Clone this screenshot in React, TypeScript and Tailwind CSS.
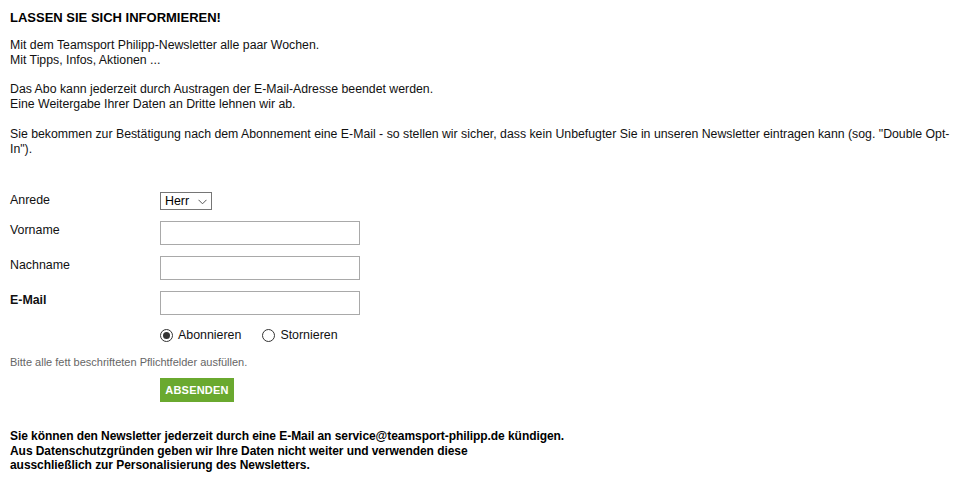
import React from 'react';

const font = { fontFamily: '"Liberation Sans", Arial, sans-serif' };

const Field: React.FC<{ label: string; bold?: boolean; pad?: string; children: React.ReactNode }> = ({ label, bold, pad = 'pt-[2px]', children }) => (
  <div className="flex items-start">
    <label className={`w-[150px] shrink-0 text-[12.4px] leading-[15px] text-[#111] ${pad} ${bold ? 'font-bold' : ''}`}>{label}</label>
    {children}
  </div>
);

const Radio: React.FC<{ checked?: boolean; label: string }> = ({ checked, label }) => (
  <label className="flex items-center gap-[5px] text-[12.4px] leading-[15px] text-[#111]">
    <span className="w-[13px] h-[13px] rounded-full border border-[#333] bg-white flex items-center justify-center">
      {checked && <span className="w-[7px] h-[7px] rounded-full bg-[#333]" />}
    </span>
    {label}
  </label>
);

export default function App() {
  return (
    <div className="bg-white min-h-[490px] pl-[10px] pt-[10px] text-[#111]" style={font}>
      <h1 className="text-[13px] leading-[16px] font-bold text-black">LASSEN SIE SICH INFORMIEREN!</h1>

      <div className="mt-[12px] text-[12.3px] leading-[14.8px] space-y-[14.8px]">
        <p>Mit dem Teamsport Philipp-Newsletter alle paar Wochen.<br />Mit Tipps, Infos, Aktionen ...</p>
        <p>Das Abo kann jederzeit durch Austragen der E-Mail-Adresse beendet werden.<br />Eine Weitergabe Ihrer Daten an Dritte lehnen wir ab.</p>
        <p>Sie bekommen zur Bestätigung nach dem Abonnement eine E-Mail - so stellen wir sicher, dass kein Unbefugter Sie in unseren Newsletter eintragen kann (sog. "Double Opt-<br />In").</p>
      </div>

      <form className="mt-[36px] flex flex-col gap-[11px]" onSubmit={(e) => e.preventDefault()}>
        <Field label="Anrede" pad="pt-[1px]">
          <div className="relative w-[52px] h-[18px]">
            <select
              defaultValue="Herr"
              className="block appearance-none w-full h-full border border-[#767676] bg-white pl-[4px] text-[12.4px] leading-[16px] text-black outline-none"
              style={font}
            >
              <option>Herr</option>
              <option>Frau</option>
            </select>
            <svg className="absolute right-[5px] top-[7px] pointer-events-none" width="9" height="6" viewBox="0 0 9 6">
              <path d="M0.5 0.8 L4.5 4.8 L8.5 0.8" fill="none" stroke="#555" strokeWidth="1" />
            </svg>
          </div>
        </Field>
        <Field label="Vorname">
          <input type="text" className="block w-[200px] h-[24px] border border-[#a9a9a9] bg-white outline-none" />
        </Field>
        <Field label="Nachname">
          <input type="text" className="block w-[200px] h-[24px] border border-[#a9a9a9] bg-white outline-none" />
        </Field>
        <Field label="E-Mail" bold>
          <input type="text" className="block w-[200px] h-[24px] border border-[#a9a9a9] bg-white outline-none" />
        </Field>
        <div className="mt-[1px] pl-[150px] flex items-center gap-[21px] h-[16px]">
          <Radio checked label="Abonnieren" />
          <Radio label="Stornieren" />
        </div>
        <p className="mt-[2px] text-[11px] leading-[13px] text-[#666]">Bitte alle fett beschrifteten Pflichtfelder ausfüllen.</p>
        <div className="pl-[150px] -mt-[2px]">
          <button type="submit" className="block w-[74px] h-[24px] bg-[#6aa92f] text-white text-[11px] font-bold tracking-[0.2px]">ABSENDEN</button>
        </div>
      </form>

      <p className="mt-[27px] text-[12px] leading-[14.5px] font-bold tracking-[-0.06px] text-black">
        Sie können den Newsletter jederzeit durch eine E-Mail an service@teamsport-philipp.de kündigen.<br />
        Aus Datenschutzgründen geben wir Ihre Daten nicht weiter und verwenden diese<br />
        ausschließlich zur Personalisierung des Newsletters.
      </p>
    </div>
  );
}
